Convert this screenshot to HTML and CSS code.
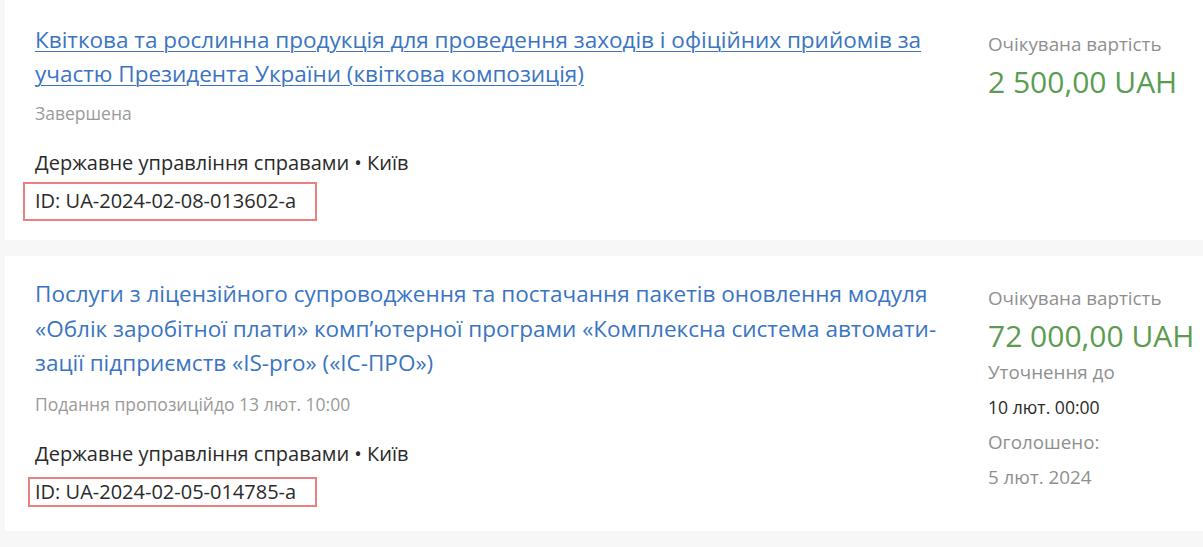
FILE: index.html
```html
<!DOCTYPE html>
<html lang="uk">
  <head>
    <meta charset="UTF-8" />
    <meta name="viewport" content="width=device-width, initial-scale=1.0" />
    <title>Закупівлі</title>
    <link rel="stylesheet" href="styles.css">
  </head>
  <body>
    <div class="list">
      <div class="card card-first">
        <div class="info">
          <a class="title title-link" href="#">Квіткова та рослинна продукція для проведення заходів і офіційних прийомів за участю Президента України (квіткова композиція)</a>
          <p class="status">Завершена</p>
          <p class="buyer">Державне управління справами • Київ</p>
          <p class="tender-id mark-wide">ID: UA-2024-02-08-013602-a</p>
        </div>
        <div class="side">
          <p class="label">Очікувана вартість</p>
          <p class="amount">2 500,00 UAH</p>
        </div>
      </div>

      <div class="card card-second">
        <div class="info">
          <a class="title" href="#">Послуги з ліцензійного супроводження та постачання пакетів оновлення модуля «Облік заробітної плати» комп’ютерної програми «Комплексна система автомати&shy;зації підприємств «IS-pro» («ІС-ПРО»)</a>
          <p class="status">Подання пропозиційдо 13 лют. 10:00</p>
          <p class="buyer">Державне управління справами • Київ</p>
          <p class="tender-id mark-tight">ID: UA-2024-02-05-014785-a</p>
        </div>
        <div class="side">
          <p class="label">Очікувана вартість</p>
          <p class="amount">72 000,00 UAH</p>
          <p class="label">Уточнення до</p>
          <p class="date">10 лют. 00:00</p>
          <p class="label">Оголошено:</p>
          <p class="label">5 лют. 2024</p>
        </div>
      </div>
    </div>
  </body>
</html>
```

FILE: styles.css
```css
body {
  margin: 0;
  font-family: "Open Sans", Arial, sans-serif;
  background-color: #f7f7f7;
  overflow: hidden;
}
p {
  margin: 0;
}
.list {
  width: 1230px;
  margin-left: 5px;
  display: flex;
  flex-direction: column;
  gap: 16px;
}
.card {
  background-color: #fff;
  display: flex;
  padding: 21px 0 24px 30px;
}
.card-first {
  padding-top: 23px;
  height: 240px;
  box-sizing: border-box;
}
.info {
  width: 908px;
}
.title {
  display: block;
  font-size: 22.5px;
  line-height: 33.5px;
  color: #3a74c2;
  text-decoration: none;
}
.card-second .title {
  line-height: 34.5px;
}
.title-link {
  text-decoration: underline;
  text-decoration-thickness: 1px;
  text-underline-offset: 3px;
}
.status {
  margin-top: 11px;
  font-size: 17.5px;
  line-height: 24px;
  color: #9a9a9a;
}
.buyer {
  margin-top: 24px;
  font-size: 20px;
  line-height: 28px;
  color: #2a2a2a;
}
.tender-id {
  display: inline-block;
  font-size: 20px;
  color: #2a2a2a;
  border: 2px solid #e98181;
}
.mark-wide {
  margin: 5px 0 0 -12px;
  padding: 3px 19px 4px 10px;
  line-height: 28px;
}
.mark-tight {
  margin: 9px 0 0 -7px;
  padding: 0 19px 0 5px;
  line-height: 26px;
}
.side {
  margin: 4px 0 0 45px;
  display: flex;
  flex-direction: column;
}
.label {
  font-size: 18.8px;
  line-height: 35px;
  color: #8f8f8f;
  white-space: nowrap;
}
.amount {
  font-size: 30px;
  line-height: 39px;
  color: #5a9c50;
  white-space: nowrap;
}
.date {
  font-size: 17.6px;
  line-height: 35px;
  color: #2a2a2a;
}
```
